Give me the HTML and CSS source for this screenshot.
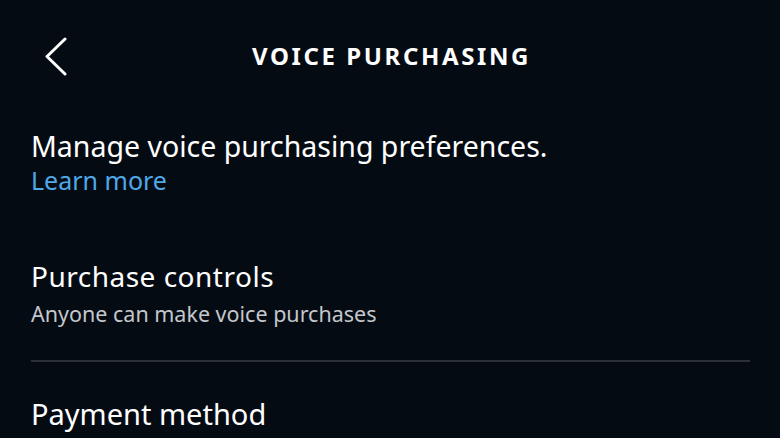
FILE: index.html
```html
<!DOCTYPE html>
<html>
<head>
<meta charset="utf-8">
<link rel="stylesheet" href="styles.css">
</head>
<body>
<div class="screen">
  <header class="topbar">
    <button class="back" aria-label="Back">
      <svg width="24" height="40" viewBox="0 0 24 40"><polyline points="20,3 2,20.5 20,38" fill="none" stroke="#fff" stroke-width="3" stroke-linecap="round" stroke-linejoin="round"/></svg>
    </button>
    <h1 class="title">VOICE PURCHASING</h1>
  </header>
  <section class="intro">
    <p class="intro-text">Manage voice purchasing preferences.</p>
    <a class="link" href="#">Learn more</a>
  </section>
  <section class="row">
    <div class="row-title">Purchase controls</div>
    <div class="row-sub">Anyone can make voice purchases</div>
  </section>
  <hr class="divider">
  <section class="row row-last">
    <div class="row-title">Payment method</div>
  </section>
</div>
</body>
</html>
```
FILE: styles.css
```css
html, body {
  margin: 0;
  padding: 0;
  background: #050b13;
  overflow: hidden;
}
.screen {
  width: 780px;
  height: 438px;
  background: #050b13;
  color: #fff;
  font-family: "Noto Sans", "Open Sans", sans-serif;
  padding: 0 30px 0 31px;
  box-sizing: border-box;
}
.topbar {
  position: relative;
  height: 112px;
  display: flex;
  align-items: center;
  justify-content: center;
}
.back {
  position: absolute;
  left: 14px;
  top: 36px;
  background: none;
  border: 0;
  padding: 0;
  width: 24px;
  height: 40px;
  display: flex;
}
.title {
  margin: 0 0 0 2px;
  font-size: 24px;
  font-weight: 700;
  letter-spacing: 2.6px;
  line-height: 30px;
}
.intro {
  display: flex;
  flex-direction: column;
  margin-top: 17px;
}
.intro-text {
  margin: 0;
  font-size: 28.5px;
  line-height: 34px;
}
.link {
  color: #4fa9e9;
  text-decoration: none;
  font-size: 25px;
  line-height: 34px;
}
.row {
  display: flex;
  flex-direction: column;
  margin-top: 62px;
}
.row-title {
  font-size: 28px;
  letter-spacing: 0.5px;
  line-height: 34px;
}
.row-sub {
  margin-top: 6px;
  font-size: 21.5px;
  line-height: 30px;
  color: #c4c7cb;
}
.divider {
  margin: 31px 0 0 0;
  border: 0;
  height: 2px;
  background: #2c3138;
}
.row-last {
  margin-top: 35px;
}
.row-last .row-title {
  font-size: 29px;
  letter-spacing: 0;
}
```
